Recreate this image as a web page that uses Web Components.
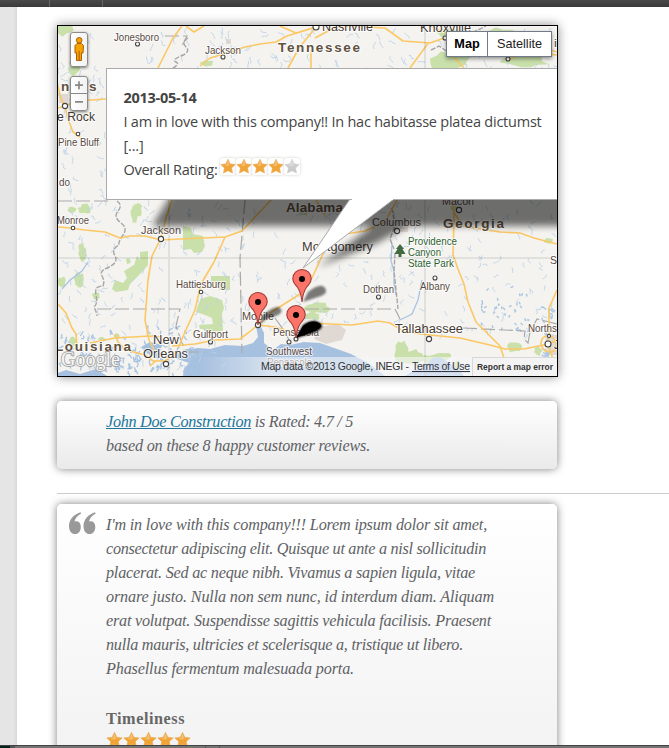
<!DOCTYPE html>
<html lang="en">
<head>
<meta charset="utf-8">
<title>Customer reviews</title>
<style>
html,body{margin:0;height:748px;overflow:hidden;background:#fff}
</style>
</head>
<body>
<review-page></review-page>
<script>
const define = (name, html, setup) => customElements.define(name, class extends HTMLElement {
  connectedCallback() {
    if (this.shadowRoot) return;
    const root = this.attachShadow({mode: 'open'});
    root.innerHTML = typeof html === 'function' ? html(this) : html;
    if (setup) setup(this, root);
  }
});

/* A line of text tracked out to a fixed measure. */
define('text-line', '<style>:host{display:block;height:24px;line-height:24px;white-space:nowrap}span{display:inline-block}</style><span><slot></slot></span>', (el, root) => {
  const s = root.querySelector('span'), want = +el.getAttribute('w');
  const n = el.textContent.length, have = s.getBoundingClientRect().width;
  s.style.letterSpacing = ((want - have) / n) + 'px';
});

/* Star rating: total stars, value filled, pitch in pixels. */
define('star-rating', el => {
  const v = +el.getAttribute('value'), p = +el.getAttribute('pitch') || 16;
  const star = i => `<svg width="${p}" height="18" viewBox="0 0 16 18"><defs><linearGradient id="o" x2="0" y2="1"><stop stop-color="#f0b45c"/><stop offset=".55" stop-color="#f1a233"/><stop offset="1" stop-color="#f2a83c"/></linearGradient><linearGradient id="g" x2="0" y2="1"><stop stop-color="#d6d6d6"/><stop offset="1" stop-color="#c6c6c6"/></linearGradient></defs><path d="M8 1.3 10.3 6.2 15.7 6.9 11.8 10.6 12.8 16 8 13.6 3.2 16 4.2 10.6.3 6.9 5.7 6.2Z" fill="url(#${i < v ? 'o' : 'g'})" stroke="${i < v ? '#e8aa55' : '#cfcfcf'}" stroke-width=".6"/><path d="M8 3 9.6 7 8 9 4 7.6 6.4 7Z" fill="#fff" opacity=".25"/></svg>`;
  return `<style>:host{display:inline-flex;height:18px}svg{display:block}:host([boxed]){height:17px}:host([boxed]) svg{background:#fff;height:17px;border-radius:3px;box-shadow:0 0 3px #ccc}</style>` + [0,1,2,3,4].map(star).join('');
});

/* Panel with a soft outer shadow and a vertical grey gradient. */
define('review-card', `<style>
:host{display:block;box-sizing:border-box;width:500px;border-radius:5px;box-shadow:0 0 9px rgba(0,0,0,.5);background:linear-gradient(#fff,var(--end,#eaeaea));padding:9px 0 0 49px;
font:italic 16.2px/24px "Liberation Serif",serif;color:#606265;position:relative}
svg{position:absolute;left:12px;top:8px}
:host(:not([quote])) svg{display:none}
::slotted(h4){margin:26px 0 0;font:bold 16.2px/22px "Liberation Serif",serif;color:#666}
::slotted(star-rating){display:flex!important;margin-top:0}
</style>
<svg width="28" height="23" viewBox="0 0 28 23" fill="#999"><path id="q" d="M11.4.3 12.2 1.4C8.3 3.700 5.900 6.600 5.500 9.600 6.100 9.300 6.700 9.200 7.300 9.200 9.900 9.200 11.800 11.100 11.800 14.900 11.800 19 9.500 22 6.200 22 2.400 22 0 18.800 0 13.900 0 7.600 4.800 2.500 11.400.3Z"/><use href="#q" x="14.500"/></svg>
<slot></slot>`);

/* Map canvas: terrain, roads, place names, bubble shadow and pins. */
define('map-canvas', () => {
  let seed = 11;
  const rnd = () => (seed = (seed * 16807) % 2147483647) / 2147483647;
  const creek = (x0, y0, w, h, n, len) => {
    let d = '';
    for (let i = 0; i < n; i++) {
      let x = x0 + rnd() * w, y = y0 + rnd() * h, a = (rnd() < .5 ? 1.1 : 2) + (rnd() - .5) * 1.4;
      d += `M${x.toFixed(1)} ${y.toFixed(1)}`;
      for (let k = 0; k < 3; k++) {
        const t = a + (rnd() - .5) * 2;
        d += `l${(Math.cos(t) * len).toFixed(1)} ${(Math.sin(t) * len).toFixed(1)}`;
      }
    }
    return d;
  };
  const blot = (x, y, w, h) => {
    let pts = [];
    for (let i = 0; i < 15; i++) {
      const a = i / 15 * 6.283, r = .7 + rnd() * .45;
      pts.push((x + w / 2 + Math.cos(a) * w / 2 * r).toFixed(1) + ',' + (y + h / 2 + Math.sin(a) * h / 2 * r).toFixed(1));
    }
    return `<polygon points="${pts.join(' ')}"/>`;
  };
  const parks = [[52,18,24,18],[68,62,12,14],[78,204,14,10],[78,243,8,18],[68,206,8,7],[57,277,9,11],[74,272,10,16],[92,292,8,8],[131,204,8,20],[136,207,6,10],[126,258,5,6],[134,203,8,6],[305,302,24,12],[303,312,18,8],[314,330,10,6],[395,341,14,24],[402,348,22,18],[422,355,10,8],[430,352,22,9],[453,360,8,12],[420,362,14,12],[506,342,16,10],[534,346,8,10],[298,206,12,10],[430,50,42,22],[462,40,30,18],[478,28,40,16],[500,54,48,14],[435,28,22,9],[200,60,14,7],[69,337,8,10],[98,337,8,5],[114,333,6,6],[288,329,8,5],[544,238,9,6],[450,205,8,6]]
    .map(a => blot(...a)).join('');
  const labels = [
    ['Jonesboro',114,41,45,11],['Jackson',205,54,36,11],['Nashville',322,31,51,12.5,'d'],['Knoxville',420,32,51,12.5,'d'],
    ['Tennessee',278,52,82,13.5,'b'],['n',61,91,8,13.5,'b'],['s',89,91,8,13.5,'b'],['e Rock',57,121,38,12.5,'d'],['Pine Bluff',58,146,41,10.5],
    ['do',59,186,11,10.5],['Monroe',57,224,32,10.5],['Jackson',141,234,40,11.5],['Alabama',286,212,57,13.5,'b'],['Columbus',372,226,49,11.5],['Macon',442,205,32,11.5],
    ['Georgia',443,228,61,13.5,'b'],['Montgomery',302,251,71,13,'d'],['Providence',408,245,49,10.5,'g'],['Canyon',408,256,33,10.5,'g'],['State Park',408,267,46,10.5,'g'],
    ['S',550,264,7,11.5],['Albany',420,290,30,10.5],['Dothan',363,293,31,10.5],['Hattiesburg',176,288,50,10.5],['Mobile',242,320,32,11.5],['Gulfport',193,338,35,10.5],
    ['Pensacola',273,336,46,10.5],['Southwest',266,355,46,10.5],['Pensacola',267,366,45,10.5,'n'],['Tallahassee',395,333,68,12.5,'d'],['Norths',528,332,29,10.5],['J',554,349,5,12.5,'d'],
    ['New',153,344,26,13,'d'],['Orleans',143,358,45,13,'d'],['Louisiana',55,351,76,13.5,'b'],['i',554,47,3,11]
  ].map(([t, x, y, w, s, c = 'n']) => `<text class="${c}" x="${x}" y="${y}" font-size="${s}" textLength="${w}" lengthAdjust="${c === 'b' ? 'spacing' : 'spacingAndGlyphs'}">${t}</text>`).join('');
  const towns = [[137.5,44,2],[223,57,2],[316,27,3],[508,59,2],[445,38,2],[65,106,2.6],[78,134,1.8],[73,228,1.8],[161,239,2.6],[201,292,1.8],[258,325,2.6],[210.5,342,2],[166,364,2.6],[296,339,2],[289,342,2],[397,231,2.6],[459,210,2.6],[435,278,2],[378.5,297,2],[429,339,2.6],[549,336,1.6],[548,344,3]]
    .map(([x, y, r]) => `<circle cx="${x}" cy="${y}" r="${r}"/>`).join('');
  const pin = (x, y) => `<g transform="translate(${x} ${y})"><path d="M0 0C-.7-8-2-11-4.800-15.200-7-18-9.200-19-9.200-23.300A9.200 9.200 0 0 1 9.200-23.300C9.200-19 7-18 4.800-15.200 2-11 .7-8 0 0Z" fill="#fb7469" stroke="#a83a35" stroke-width="1.100"/><circle cy="-23" r="3" fill="#000"/></g>`;
  return `<style>
:host{display:block;width:499px;height:350px}
svg{display:block}
text{font-family:"Liberation Sans",sans-serif;paint-order:stroke;stroke:#fff;stroke-opacity:.75;stroke-width:2px;stroke-linejoin:round;fill:#594a42}
.d{fill:#453a33}.g{fill:#2d6030}.b{font-weight:bold;fill:#61513f}
.road path{fill:none;stroke:#fbc865;stroke-width:1.600;stroke-linejoin:round}
</style>
<svg width="499" height="350" viewBox="58 26 499 350">
<defs><filter id="b3" x="-20%" y="-40%" width="140%" height="200%"><feGaussianBlur stdDeviation="3.500"/></filter><filter id="b1" x="-50%" y="-50%" width="200%" height="200%"><feGaussianBlur stdDeviation="1.200"/></filter></defs>
<rect x="58" y="26" width="499" height="350" fill="#f4f3ef"/>
<g fill="#cae0ab">${parks}
<path d="M183 226l8 2 2 6 10 2 2 10-3 6-8 1-3-4-8 1zM115 280l8 3 4-5-3-7 10-6 3-9 3 4v-8l8-1v14l-8 9-10 10-2 6-12 2-4-3zM200 299l10-3 12 4 2 8-2 6 1 17-18 1-2-3h-3l-1-4 14-1-1-6-7-3-9-3 2-7 2-3zM211 276h19v14h-11l-1-7h-7z"/></g>
<path fill="#e0d9d3" d="M318 327l20-3 8 6-4 10-16 4-12-5zM59 94h9v9h-9zM226 39h5v5h-5zM400 222h8v10h-8zM419 325h9v8h-9zM545 335h12v20h-9z"/>
<path fill="#a6c0df" d="M183 376 184 368 191 362 190 355 182 350 198 348 210 349 225 345 243 346 253 343 258 337 256 326 261 327 264 333 264 343 273 350 281 344 290 345 304 342 320 343 337 349 351 354 368 363 385 376ZM405 376 413 371 426 366 432 358 440 357 446 361 460 371 464 376ZM141 347 150 342 163 345 158 352 148 354ZM172 357 186 350 196 355 198 364 186 362ZM58 373 66 370 80 374 96 369 107 376H58Z"/>
<g fill="none" stroke="#b9d0e8" stroke-width="1">
<path stroke-width=".8" d="${creek(58,26,499,43,110,2.6)}${creek(58,65,48,135,50,2.6)}${creek(58,200,180,170,190,2.2)}${creek(240,200,180,125,110,2.3)}${creek(420,200,137,135,80,2)}"/>
<path stroke="#a9c4e2" stroke-width="1.300" d="${creek(110,345,85,28,60,2)}${creek(60,330,60,40,35,1.8)}${creek(540,305,16,60,22,2)}${creek(480,285,50,45,38,1)}${creek(115,325,70,25,20,1.5)}"/>
<path stroke="#a9c4e2" stroke-width="1.300" d="M392 243l-1 18 3 10 0 12 2 12M62 289l8-9 12-9 6-9M259 320l-2-12 3-10M400 320l12-6 6-14 4-20"/></g>
<g stroke="#aaa" stroke-width="1.200" fill="none">
<path stroke-dasharray="14 4" d="M58 201H108M97 309H180L176 326 182 343 188 352H204M245 200 240 258 242 353M305 309H395L400 319M463 328 525 331 524 339 528 343 530 332 537 319 557 324M275 318l10 14 5 10M165 36h22l-5 10"/>
<path stroke="#a6a6a6" stroke-width="1.400" stroke-dasharray="5 1.500" d="M117 201q6 4 1 10t3 12q7 5 2 12t-4 10q-8 4-4 11t-8 12q-8 3-5 8t1 10q-9 0-7 9t-2 12q3 6 3 9M188 38q-7 4-2 9t-5 9-5 6-6 8M392 208l3 18-5 13 4 10M395 253l-1 18 3 28 1 10M448 41l18-5 20-10M431 50l8-4 16 11"/></g>
<g class="road">
<path d="M182 26 173 38 158 68M200 66 210 58 224 54 245 47 260 44 276 42 287 36 310 29M186 26 194 32 204 26M311 50V68M315 38 330 30 345 26M345 26 385 28 403 41 430 43 450 36M429 42 410 68M446 43 450 53 460 64 464 68M430 26 447 33 455 36M280 26 296 33 316 27 299 48 288 68M525 35 539 46 557 52M508 60 525 52 557 55"/>
<path d="M58 86 61 99 65 106 58 108M65 106 76 101 106 99M65 106 68 119 73 132 80 137"/>
<path d="M58 227 70 228 85 230 105 232 120 238 130 236 145 236 161 240 180 239 225 237 242 231 255 217 272 199M172 200 166 218 161 238 152 256 148 280 145 320 149 340 155 352M225 237 214 262 201 284 195 310 185 332 178 348M58 304 66 313 72 328 76 334 77 347M90 343 115 338 150 336 162 337M115 334 118 342 126 350 145 355 153 361 165 361 178 352M150 366 157 360M172 346 195 344 215 340 240 339 248 333 258 325 275 327 292 332M258 325 270 313 300 294 312 278 322 256 330 240M332 240 345 234 365 231 385 222 397 200M325 215 316 200"/>
<path d="M298 334 310 323 352 325 378 321 390 323 405 332 430 335 460 338 490 345 505 349 524 349 548 344M453 200 454 218 453 255 458 269 464 284 468 302 476 322 490 336 500 346 504 358M454 212 462 226 500 232 520 233 534 238 557 244M557 290 549 308 549 330 548 344 553 359 557 363M548 344 557 340M541 344q0-8 7-8t8 8-6 8-9-8"/>
</g>
<g stroke="#000" opacity=".08" stroke-width="2" fill="none"><path d="M58 258H557M169 200V376M425 26V376"/></g>
<g fill="#fff" stroke="#444" stroke-width="1.100">${towns}</g>
${labels}
<path d="M400 244l4 5h-1.500l3 5h-4v3h-3v-3h-4l3-5H396Z" fill="#426b42"/>
<g opacity=".55" filter="url(#b3)"><path d="M180 180H580V226H408L375 244 318 267 372 226H152Z"/></g>
<g filter="url(#b1)" opacity=".5"><path d="M303 302 308 292Q321 282 325 288T318 297Z"/><path d="M259 325 264 314Q278 303 281 309T268 318Z"/></g>
<path d="M296 338 303 325Q313 318 320 323T310 334Z" filter="url(#b1)"/>
<path d="M296 338 303 326Q312 319 319 323T309 333Z"/>
<linearGradient id="attr"><stop stop-color="#f4f6f8" stop-opacity="0"/><stop offset=".25" stop-color="#f4f6f8" stop-opacity=".6"/></linearGradient>
<rect x="200" y="357" width="272" height="19" fill="url(#attr)"/><path d="M472 357h85v19h-85z" fill="#f3f3f3"/><path d="M472.500 376v-18.500H557" stroke="#d8d8d8" fill="none"/>
<text x="261" y="370" font-size="10.500" textLength="148" style="stroke:none;fill:#333">Map data ©2013 Google, INEGI -</text>
<text x="412" y="370" font-size="10.500" textLength="58" style="stroke:none;fill:#333344;text-decoration:underline">Terms of Use</text>
<text x="477" y="370" font-size="9.500" font-weight="bold" textLength="76" lengthAdjust="spacingAndGlyphs" style="stroke:none;fill:#333">Report a map error</text>
<text x="61" y="366" font-size="20" textLength="59" lengthAdjust="spacingAndGlyphs" style="font-family:'Liberation Serif',serif;fill:#f6f6f6;stroke:#a5a5a5;stroke-width:1.800;stroke-opacity:1">Google</text>
${pin(302, 302)}${pin(258, 325)}${pin(296, 338)}
<path d="M350 199 303 268 394 199" fill="#fff" stroke="#aaa"/>
</svg>`;
});

define('map-type-switch', `<style>
:host{position:absolute;left:388px;top:5px;display:flex;box-sizing:border-box;width:106px;height:26px;background:#fff;border:1px solid #717b87;box-shadow:0 2px 4px rgba(0,0,0,.4);font:12.700px/24px "Liberation Sans",sans-serif;color:#222;text-align:center}
b{width:40px;color:#000}span{flex:1;border-left:1px solid #717b87}</style><b>Map</b><span>Satellite</span>`);

define('map-zoom', `<style>
:host{position:absolute;left:12px;top:6px;display:flex;flex-direction:column;gap:9px;width:18px}
div{box-sizing:border-box;width:18px;height:35px;background:linear-gradient(90deg,#fff,#f2f2f2);border:1px solid #8b8b8b;border-radius:3px;box-shadow:0 1px 3px rgba(0,0,0,.5)}svg{display:block}</style>
<div><svg width="16" height="33" viewBox="0 0 16 33" fill="#f3a200" stroke="#ae5f0c" stroke-width="1"><path d="M4 12.500 6 10.500H10.500L12.500 12.500 12 20H10.500V27.500H5.500V20H4Z"/><path d="M8.200 18V27" /><circle cx="8.200" cy="7.300" r="2.800"/></svg></div>
<div><svg width="16" height="33" viewBox="0 0 16 33" stroke="#888" fill="none"><path d="M0 16.500H16"/><path stroke-width="1.700" d="M4 8.200h8M8 4.200v8M4 24.800h8"/></svg></div>`);

define('map-bubble', `<style>
:host{position:absolute;left:48px;top:42px;box-sizing:border-box;width:452px;height:132px;background:#fff;border:1px solid #aaa;border-right:0;padding:17px 0 0 16.500px;font:14.500px/24px "Open Sans",sans-serif;color:#444}
.row{display:flex}star-rating{margin-top:0;margin-left:2px}
i{position:absolute;left:245px;top:130px;width:41px;height:1px;background:#fff}</style>
<text-line w="73"><b>2013-05-14</b></text-line>
<text-line w="418">I am in love with this company!! In hac habitasse platea dictumst</text-line>
<text-line w="20">[...]</text-line>
<div class="row"><text-line w="94">Overall Rating:</text-line><star-rating value="4" boxed></star-rating></div><i></i>`);

define('review-map', `<style>
:host{display:block;position:relative;width:499px;height:350px;border:1px solid #000;box-shadow:0 0 10px rgba(0,0,0,.45)}
.clip{position:relative;width:499px;height:350px;overflow:hidden}</style>
<div class="clip"><map-canvas></map-canvas><map-type-switch></map-type-switch><map-zoom></map-zoom><map-bubble></map-bubble></div>`);

define('review-page', `<style>
:host{display:grid;grid-template-rows:7px 738px 3px;width:669px;height:748px;overflow:hidden}
header{background:linear-gradient(90deg,transparent 49px,#666 49px 50px,transparent 50px 102px,#666 102px 103px,transparent 103px),linear-gradient(#4a4a4a,#393939)}
main{display:grid;grid-template-columns:17px 40px 1fr;overflow:hidden;min-height:0}
aside{background:linear-gradient(90deg,#e5e5e5 13px,#d9d9d9)}
section{grid-column:3;padding-top:18px}
.rating{height:68px;margin-top:24px}
hr{border:0;height:1px;background:#ccc;margin:24px 0 10px}
.review{height:420px;--end:#eaeaea}
a{color:#21759b;text-decoration:underline}
footer{box-sizing:border-box;border-top:1px solid #444;background:linear-gradient(90deg,#02231a 10px,#555 10px 15px,transparent 15px 205px,#555 205px 206px,transparent 206px 219px,#555 219px 220px,transparent 220px),linear-gradient(#747474,#747474)}
</style>
<header></header>
<main><aside></aside><section>
<review-map></review-map>
<review-card class="rating"><text-line w="247"><a>John Doe Construction</a> is Rated: 4.7 / 5</text-line><text-line w="264">based on these 8 happy customer reviews.</text-line></review-card>
<hr>
<review-card class="review" quote>
<text-line w="381">I'm in love with this company!!! Lorem ipsum dolor sit amet,</text-line>
<text-line w="380">consectetur adipiscing elit. Quisque ut ante a nisl sollicitudin</text-line>
<text-line w="369">placerat. Sed ac neque nibh. Vivamus a sapien ligula, vitae</text-line>
<text-line w="388">ornare justo. Nulla non sem nunc, id interdum diam. Aliquam</text-line>
<text-line w="385">erat volutpat. Suspendisse sagittis vehicula facilisis. Praesent</text-line>
<text-line w="357">nulla mauris, ultricies et scelerisque a, tristique ut libero.</text-line>
<text-line w="248">Phasellus fermentum malesuada porta.</text-line>
<h4><text-line w="79">Timeliness</text-line></h4>
<star-rating value="5" pitch="17"></star-rating>
</review-card>
</section></main>
<footer></footer>`);
</script>
</body>
</html>
